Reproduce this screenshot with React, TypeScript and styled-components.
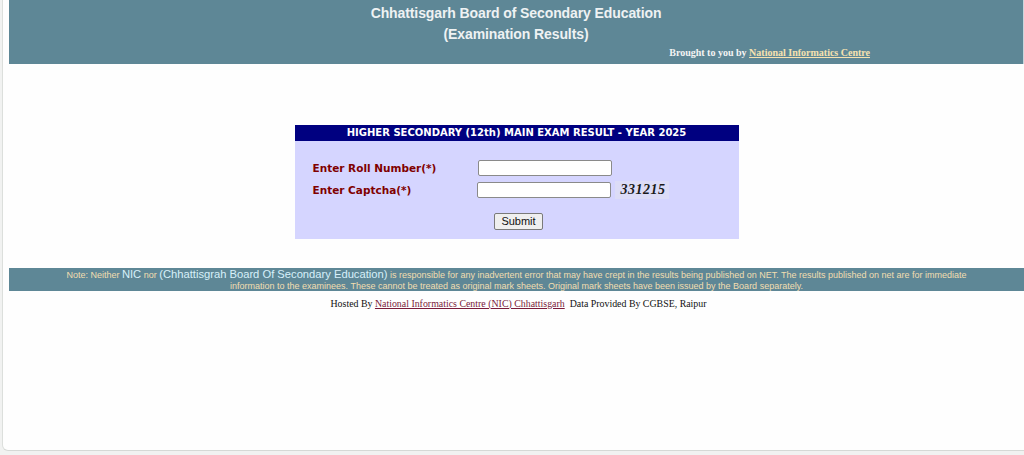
import React from 'react';
import styled, { createGlobalStyle } from 'styled-components';

const GlobalStyle = createGlobalStyle`
  html, body {
    margin: 0;
    padding: 0;
    background: #f1f2f1;
  }
`;

const Frame = styled.div`
  margin-left: 2px;
  height: 451px;
  background: #fefefe;
  border-left: 1px solid #dcdfdc;
  border-bottom: 1px solid #d6d9d6;
  border-bottom-left-radius: 6px;
  padding-left: 6px;
  box-sizing: border-box;
  overflow: hidden;
`;

const Header = styled.div`
  background: #5e8796;
  height: 64px;
  box-sizing: border-box;
  padding-top: 5px;
  border-right: 1px solid #c9d6dc;
  font-family: 'Liberation Sans', Arial, sans-serif;
  color: #eef2f3;
`;

const Title = styled.div`
  font-size: 14px;
  font-weight: bold;
  text-align: center;
  line-height: 16px;
  height: 21px;
  letter-spacing: -0.1px;
`;

const Brought = styled.div`
  font-family: 'Liberation Serif', 'Times New Roman', serif;
  font-size: 10px;
  font-weight: bold;
  text-align: right;
  padding-right: 153px;
  color: #f4f4f4;
`;

const HeaderLink = styled.a`
  color: #f6e2b0;
  text-decoration: underline;
`;

const Card = styled.div`
  width: 444px;
  margin: 61px auto 0;
  background: #d5d5ff;
  font-family: 'DejaVu Sans', Verdana, sans-serif;
`;

const CardTitle = styled.div`
  background: #000080;
  color: #ffffff;
  font-size: 10px;
  font-weight: bold;
  text-align: center;
  height: 16px;
  line-height: 16px;
`;

const CardBody = styled.div`
  padding: 19px 0 9px 18px;
`;

const Row = styled.div<{ $inputOffset?: number }>`
  display: flex;
  align-items: center;
  height: 16px;
  margin-bottom: 6px;

  & > input {
    margin-left: ${(p) => p.$inputOffset ?? 0}px;
  }
`;

const Label = styled.label`
  width: 165px;
  color: #800000;
  font-size: 10.5px;
  font-weight: bold;
`;

const TextInput = styled.input`
  width: 134px;
  height: 16px;
  box-sizing: border-box;
  border: 1px solid #8a8a8a;
  border-radius: 2px;
  background: #ffffff;
  padding: 0 3px;
`;

const Captcha = styled.span`
  margin-left: 4px;
  background: #dcdcf7;
  width: 54px;
  height: 18px;
  line-height: 18px;
  padding-left: 6px;
  box-sizing: border-box;
  font-family: 'Liberation Serif', 'Times New Roman', serif;
  font-style: italic;
  font-weight: bold;
  font-size: 14px;
  color: #1a1a1a;
  letter-spacing: 0.5px;
`;

const ButtonRow = styled.div`
  text-align: center;
  margin-top: 12px;
  padding-right: 14px;
`;

const SubmitButton = styled.button`
  font-family: 'Liberation Sans', Arial, sans-serif;
  font-size: 11px;
  height: 17px;
  padding: 0 6px;
  background: #efefef;
  border: 1px solid #7a7a7a;
  border-radius: 2px;
  color: #111;
`;

const Note = styled.div`
  margin-top: 29px;
  background: #5e8796;
  font-family: 'Liberation Sans', Arial, sans-serif;
  font-size: 9px;
  line-height: 11px;
  color: #f2deb0;
  text-align: center;
  padding: 1px 44px 1px;
  height: 23px;
  box-sizing: border-box;
`;

const Em = styled.span`
  color: #d7f0fa;
  font-size: 11.2px;
  line-height: 10px;
`;

const Footer = styled.div`
  margin-top: 7px;
  text-align: center;
  font-family: 'Liberation Serif', 'Times New Roman', serif;
  font-size: 9.9px;
  color: #111;
  padding-left: 4px;
`;

const FooterLink = styled.a`
  color: #7a1a3a;
  text-decoration: underline;
`;

export default function App() {
  return (
    <>
      <GlobalStyle />
      <Frame>
        <Header>
          <Title>Chhattisgarh Board of Secondary Education</Title>
          <Title>(Examination Results)</Title>
          <Brought>
            Brought to you by <HeaderLink href="#">National Informatics Centre</HeaderLink>
          </Brought>
        </Header>

        <Card>
          <CardTitle>HIGHER SECONDARY (12th) MAIN EXAM RESULT - YEAR 2025</CardTitle>
          <CardBody>
            <Row $inputOffset={0}>
              <Label>Enter Roll Number(*)</Label>
              <TextInput type="text" />
            </Row>
            <Row $inputOffset={-1}>
              <Label>Enter Captcha(*)</Label>
              <TextInput type="text" />
              <Captcha>331215</Captcha>
            </Row>
            <ButtonRow>
              <SubmitButton type="button">Submit</SubmitButton>
            </ButtonRow>
          </CardBody>
        </Card>

        <Note>
          Note: Neither <Em>NIC</Em> nor <Em>(Chhattisgrah Board Of Secondary Education)</Em> is
          responsible for any inadvertent error that may have crept in the results being published on
          NET. The results published on net are for immediate information to the examinees. These
          cannot be treated as original mark sheets. Original mark sheets have been issued by the Board
          separately.
        </Note>

        <Footer>
          Hosted By <FooterLink href="#">National Informatics Centre (NIC) Chhattisgarh</FooterLink>
          {'\u00a0 '}Data Provided By CGBSE, Raipur
        </Footer>
      </Frame>
    </>
  );
}
